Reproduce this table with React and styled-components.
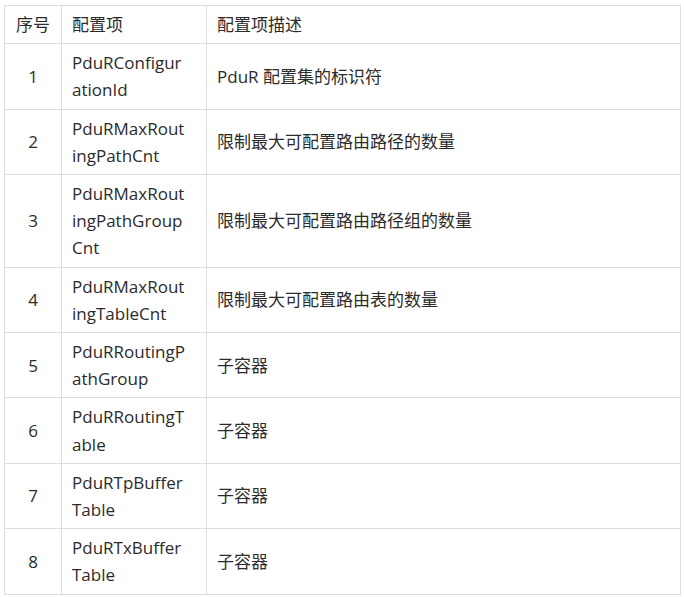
import React from "react";
import styled, { createGlobalStyle } from "styled-components";

const Global = createGlobalStyle`
  html, body { margin: 0; padding: 0; background: #fff; }
  body { padding: 5px 3px 0 4px; }
`;

const Table = styled.table`
  width: 677px;
  border-collapse: collapse;
  table-layout: fixed;
  font-family: "Open Sans", "Noto Sans CJK SC", sans-serif;
  font-size: 17px;
  line-height: 27.2px;
  color: #2b2b2b;
`;

const Cell = styled.td`
  border: 1px solid #dddddd;
  padding: 5px 10px;
  text-align: ${(p) => (p.$center ? "center" : "left")};
  vertical-align: middle;
  white-space: nowrap;
  overflow: hidden;
`;

const Head = styled(Cell).attrs({ as: "th" })`
  font-weight: normal;
  text-align: ${(p) => (p.$center ? "center" : "left")};
`;

const Line = styled.span`
  display: block;
`;

const rows = [
  ["1", ["PduRConfigur", "ationId"], "PduR 配置集的标识符"],
  ["2", ["PduRMaxRout", "ingPathCnt"], "限制最大可配置路由路径的数量"],
  ["3", ["PduRMaxRout", "ingPathGroup", "Cnt"], "限制最大可配置路由路径组的数量"],
  ["4", ["PduRMaxRout", "ingTableCnt"], "限制最大可配置路由表的数量"],
  ["5", ["PduRRoutingP", "athGroup"], "子容器"],
  ["6", ["PduRRoutingT", "able"], "子容器"],
  ["7", ["PduRTpBuffer", "Table"], "子容器"],
  ["8", ["PduRTxBuffer", "Table"], "子容器"],
];

export default function App() {
  return (
    <>
      <Global />
      <Table>
        <colgroup>
          <col style={{ width: 57 }} />
          <col style={{ width: 145 }} />
          <col />
        </colgroup>
        <thead>
          <tr>
            <Head $center>序号</Head>
            <Head>配置项</Head>
            <Head>配置项描述</Head>
          </tr>
        </thead>
        <tbody>
          {rows.map(([n, k, d]) => (
            <tr key={n}>
              <Cell $center>{n}</Cell>
              <Cell>
                {k.map((part) => (
                  <Line key={part}>{part}</Line>
                ))}
              </Cell>
              <Cell>{d}</Cell>
            </tr>
          ))}
        </tbody>
      </Table>
    </>
  );
}
